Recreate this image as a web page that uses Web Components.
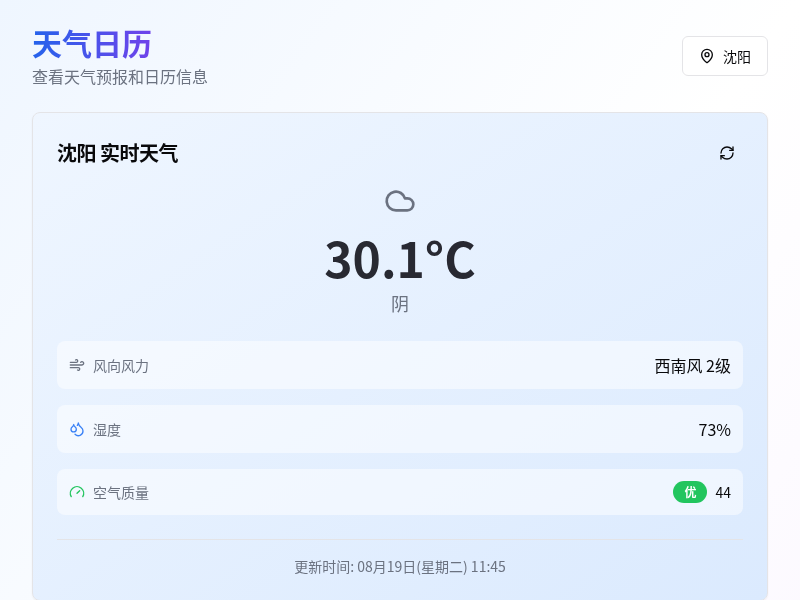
<!DOCTYPE html>
<html lang="zh">
<head>
<meta charset="utf-8">
<style>
    html, body { margin: 0; overflow: hidden; }
    /* the real page is taller than the window, so the gradient runs past the fold */
    body {
        height: 1100px;
        background: linear-gradient(to bottom right, #eff6ff 0%, #ffffff 50%, #faf5ff 100%);
        font-family: "Noto Sans CJK SC", "Noto Sans", sans-serif;
        color: #09090b;
    }
</style>
</head>
<body>
<weather-app></weather-app>

<script>
const icons = {
    pin: '<path d="M20 10c0 5-5.5 10.2-7.4 11.8a1 1 0 0 1-1.2 0C9.5 20.2 4 15 4 10a8 8 0 0 1 16 0"/><circle cx="12" cy="10" r="3"/>',
    refresh: '<path d="M3 12a9 9 0 0 1 9-9 9.75 9.75 0 0 1 6.74 2.74L21 8"/><path d="M21 3v5h-5"/><path d="M21 12a9 9 0 0 1-9 9 9.75 9.75 0 0 1-6.74-2.74L3 16"/><path d="M8 16H3v5"/>',
    cloud: '<path d="M17.5 19H9a7 7 0 1 1 6.71-9h1.79a4.5 4.5 0 1 1 0 9Z"/>',
    wind: '<path d="M12.8 19.6A2 2 0 1 0 14 16H2"/><path d="M17.5 8a2.5 2.5 0 1 1 2 4H2"/><path d="M9.8 4.4A2 2 0 1 1 11 8H2"/>',
    droplets: '<path d="M7 16.3c2.2 0 4-1.83 4-4.05 0-1.16-.57-2.26-1.71-3.19S7.29 6.75 7 5.3c-.29 1.45-1.14 2.84-2.29 3.76S3 11.1 3 12.25c0 2.22 1.8 4.05 4 4.05z"/><path d="M12.56 6.6A10.97 10.97 0 0 0 14 3.02c.5 2.5 2 4.9 4 6.5s3 3.5 3 5.5a6.98 6.98 0 0 1-11.91 4.97"/>',
    gauge: '<path d="m12 14 4-4"/><path d="M3.34 19a10 10 0 1 1 17.32 0"/>'
};

function icon(name, size, color) {
    return `<svg width="${size}" height="${size}" viewBox="0 0 24 24" fill="none" stroke="${color}" stroke-width="2" stroke-linecap="round" stroke-linejoin="round">${icons[name]}</svg>`;
}

class CityButton extends HTMLElement {
    constructor() {
        super();
        this.attachShadow({ mode: 'open' }).innerHTML = `
            <style>
                :host {
                    display: flex; align-items: center; gap: 8px;
                    box-sizing: border-box; height: 40px; padding: 0 16px;
                    background: #fff; border: 1px solid #e4e4e7; border-radius: 6px;
                    font-size: 14px; line-height: 20px;
                }
                svg { display: block; }
            </style>
            ${icon('pin', 16, '#09090b')}<span><slot></slot></span>`;
    }
}

class InfoRow extends HTMLElement {
    constructor() {
        super();
        const name = this.getAttribute('icon');
        const color = this.getAttribute('color');
        this.attachShadow({ mode: 'open' }).innerHTML = `
            <style>
                :host {
                    display: flex; align-items: center; justify-content: space-between;
                    padding: 12px; border-radius: 8px;
                    background: rgba(255, 255, 255, 0.5);
                }
                .label { display: flex; align-items: center; gap: 8px; font-size: 14px; line-height: 20px; color: #6b7280; }
                .value { display: flex; align-items: center; gap: 8px; font-size: 16px; line-height: 24px; }
                svg { display: block; }
            </style>
            <div class="label">${icon(name, 16, color)}<span>${this.getAttribute('label')}</span></div>
            <div class="value"><slot></slot></div>`;
    }
}

class GradeBadge extends HTMLElement {
    constructor() {
        super();
        this.attachShadow({ mode: 'open' }).innerHTML = `
            <style>
                :host {
                    display: block; padding: 2px 10px; border-radius: 999px;
                    border: 1px solid transparent;
                    background: #22c55e; color: #fff;
                    font-size: 12px; font-weight: 600; line-height: 16px;
                }
            </style>
            <slot></slot>`;
    }
}

class WeatherCard extends HTMLElement {
    constructor() {
        super();
        this.attachShadow({ mode: 'open' }).innerHTML = `
            <style>
                :host {
                    display: block; padding: 24px;
                    background: linear-gradient(to bottom right, #eff6ff, #dbeafe);
                    border: 1px solid #e4e4e7; border-radius: 8px;
                    box-shadow: 0 1px 2px rgba(0,0,0,.05);
                }
                header { display: flex; align-items: center; justify-content: space-between; height: 32px; }
                h2 { margin: 0; font-size: 20px; font-weight: 600; line-height: 28px; letter-spacing: -0.5px; }
                .refresh { display: flex; align-items: center; justify-content: center; width: 32px; height: 32px; }
                .now { display: flex; flex-direction: column; align-items: center; margin-top: 16px; }
                .temp { font-size: 48px; font-weight: 700; line-height: 48px; color: #282932; margin-top: 16px; }
                .desc { font-size: 18px; line-height: 28px; color: #6b7280; margin-top: 8px; }
                .rows { display: flex; flex-direction: column; gap: 16px; margin-top: 24px; }
                .aqi { font-size: 14px; line-height: 20px; }
                footer {
                    margin-top: 24px; padding-top: 16px; border-top: 1px solid #e4e4e7;
                    text-align: center; font-size: 14px; line-height: 20px; color: #6b7280;
                }
                svg { display: block; }
            </style>
            <header>
                <h2>沈阳 实时天气</h2>
                <div class="refresh">${icon('refresh', 16, '#09090b')}</div>
            </header>
            <div class="now">
                ${icon('cloud', 32, '#6b7280')}
                <div class="temp">30.1°C</div>
                <div class="desc">阴</div>
            </div>
            <div class="rows">
                <info-row icon="wind" color="#6b7280" label="风向风力">西南风 2级</info-row>
                <info-row icon="droplets" color="#3b82f6" label="湿度">73%</info-row>
                <info-row icon="gauge" color="#22c55e" label="空气质量"><grade-badge>优</grade-badge><span class="aqi">44</span></info-row>
            </div>
            <footer>更新时间: 08月19日(星期二) 11:45</footer>`;
    }
}

class WeatherApp extends HTMLElement {
    constructor() {
        super();
        this.attachShadow({ mode: 'open' }).innerHTML = `
            <style>
                /* own layer: text gets the softer greyscale antialiasing of the reference */
                :host { display: block; padding: 24px 32px; will-change: transform; }
                .top { display: flex; align-items: center; justify-content: space-between; margin-bottom: 24px; }
                h1 {
                    margin: 0; font-size: 30px; font-weight: 700; line-height: 36px;
                    background: linear-gradient(to right, #2563eb, #9333ea);
                    -webkit-background-clip: text; background-clip: text; color: transparent;
                }
                p { margin: 4px 0 0; font-size: 16px; line-height: 24px; color: #6b7280; }
            </style>
            <div class="top">
                <div><h1>天气日历</h1><p>查看天气预报和日历信息</p></div>
                <city-button>沈阳</city-button>
            </div>
            <weather-card></weather-card>`;
    }
}

customElements.define('city-button', CityButton);
customElements.define('grade-badge', GradeBadge);
customElements.define('info-row', InfoRow);
customElements.define('weather-card', WeatherCard);
customElements.define('weather-app', WeatherApp);
</script>
</body>
</html>
